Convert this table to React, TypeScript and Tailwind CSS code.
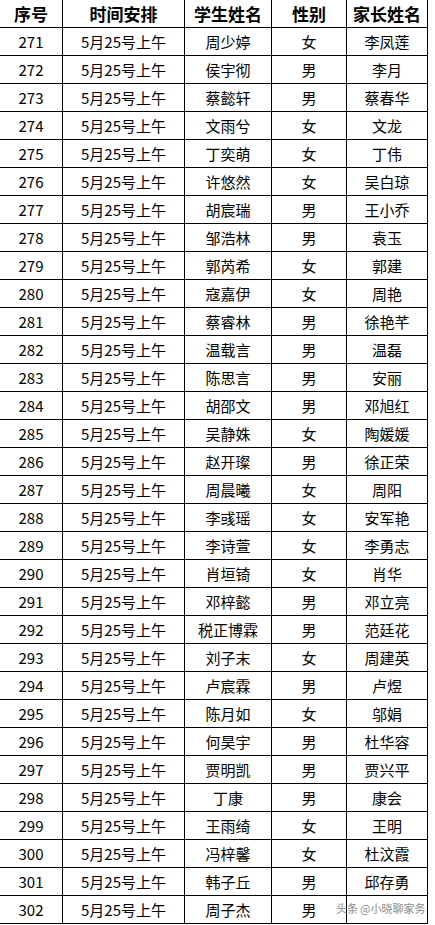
import React from "react";

const rows: [number, string, string, string][] = [
  [271, "周少婷", "女", "李凤莲"],
  [272, "侯宇彻", "男", "李月"],
  [273, "蔡懿轩", "男", "蔡春华"],
  [274, "文雨兮", "女", "文龙"],
  [275, "丁奕萌", "女", "丁伟"],
  [276, "许悠然", "女", "吴白琼"],
  [277, "胡宸瑞", "男", "王小乔"],
  [278, "邹浩林", "男", "袁玉"],
  [279, "郭芮希", "女", "郭建"],
  [280, "寇嘉伊", "女", "周艳"],
  [281, "蔡睿林", "男", "徐艳芊"],
  [282, "温载言", "男", "温磊"],
  [283, "陈思言", "男", "安丽"],
  [284, "胡邵文", "男", "邓旭红"],
  [285, "吴静姝", "女", "陶媛媛"],
  [286, "赵开璨", "男", "徐正荣"],
  [287, "周晨曦", "女", "周阳"],
  [288, "李彧瑶", "女", "安军艳"],
  [289, "李诗萱", "女", "李勇志"],
  [290, "肖垣锜", "女", "肖华"],
  [291, "邓梓懿", "男", "邓立亮"],
  [292, "税正博霖", "男", "范廷花"],
  [293, "刘子末", "女", "周建英"],
  [294, "卢宸霖", "男", "卢煜"],
  [295, "陈月如", "女", "邬娟"],
  [296, "何昊宇", "男", "杜华容"],
  [297, "贾明凯", "男", "贾兴平"],
  [298, "丁康", "男", "康会"],
  [299, "王雨绮", "女", "王明"],
  [300, "冯梓馨", "女", "杜汶霞"],
  [301, "韩子丘", "男", "邱存勇"],
  [302, "周子杰", "男", ""],
];

const cell =
  "flex items-center justify-center border-r border-b border-black h-[28px] box-border";

function Row({ cols, header }: { cols: string[]; header?: boolean }) {
  const widths = ["w-[63px]", "w-[122px]", "w-[87px]", "w-[75px]", "w-[81px]"];
  return (
    <div
      className={
        "flex " +
        (header ? "text-[17px] font-bold" : "text-[15px] font-normal")
      }
    >
      {cols.map((c, i) => (
        <div key={i} className={cell + " " + widths[i]}>
          <span className="leading-none">{c}</span>
        </div>
      ))}
    </div>
  );
}

export default function App() {
  return (
    <div
      className="relative w-[435px] h-[925px] bg-white text-black overflow-hidden"
      style={{ fontFamily: '"Noto Sans CJK SC", "Noto Sans", sans-serif' }}
    >
      <Row header cols={["序号", "时间安排", "学生姓名", "性别", "家长姓名"]} />
      {rows.map((r) => (
        <Row
          key={r[0]}
          cols={[String(r[0]), "5月25号上午", r[1], r[2], r[3]]}
        />
      ))}
      <div className="absolute left-[336px] top-[903px] flex items-center gap-[2px] whitespace-nowrap text-[11px] leading-none text-[#8c8c8c] [text-shadow:0_0_1px_rgba(255,255,255,0.9)]">
        <span>头条</span>
        <span>@小晓聊家务</span>
      </div>
    </div>
  );
}
